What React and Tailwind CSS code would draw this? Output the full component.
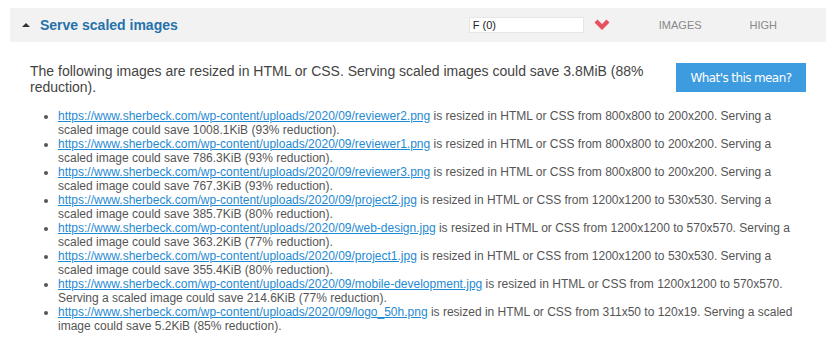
import React from "react";

const base = "https://www.sherbeck.com/wp-content/uploads/2020/09/";
const items = [
  ["reviewer2.png", "800x800 to 200x200", "1008.1KiB (93% reduction)."],
  ["reviewer1.png", "800x800 to 200x200", "786.3KiB (93% reduction)."],
  ["reviewer3.png", "800x800 to 200x200", "767.3KiB (93% reduction)."],
  ["project2.jpg", "1200x1200 to 530x530", "385.7KiB (80% reduction)."],
  ["web-design.jpg", "1200x1200 to 570x570", "363.2KiB (77% reduction)."],
  ["project1.jpg", "1200x1200 to 530x530", "355.4KiB (80% reduction)."],
  ["mobile-development.jpg", "1200x1200 to 570x570", "214.6KiB (77% reduction)."],
  ["logo_50h.png", "311x50 to 120x19", "5.2KiB (85% reduction)."],
];

export default function App() {
  return (
    <div className="bg-white w-[837px] h-[341px] pt-2 px-[10px] font-['Liberation_Sans',Arial,sans-serif] text-[#555]">
      <div className="w-[816px]">
        <div className="h-[34px] bg-[#f2f2f2] flex items-center">
          <span className="ml-[12px] w-0 h-0 border-l-[4px] border-r-[4px] border-b-[4px] border-l-transparent border-r-transparent border-b-[#333]"></span>
          <span className="ml-[10px] text-[14px] font-bold text-[#2471ab] leading-none">Serve scaled images</span>
          <div className="ml-[291px] w-[115px] h-[16px] bg-white border border-[#e6e6e6] flex items-center pl-[3px] text-[11px] text-[#222]">F (0)</div>
          <svg className="ml-[10px]" width="16" height="12" viewBox="0 0 16 12">
            <path d="M0.5 3.5 L3.5 0.5 L8 5 L12.5 0.5 L15.5 3.5 L8 11 Z" fill="#e8505f" />
          </svg>
          <span className="ml-[49px] text-[11px] text-[#888]">IMAGES</span>
          <span className="ml-[48px] text-[11px] text-[#888]">HIGH</span>
        </div>
        <div className="px-5 pt-[21px]">
          <div className="flex items-start">
            <p className="flex-1 text-[14px] leading-[16px] text-[#444] pr-[30px]">
              The following images are resized in HTML or CSS. Serving scaled images could save 3.8MiB (88% reduction).
            </p>
            <button className="w-[130px] h-[29px] bg-[#3d9be0] text-white text-[12px] font-['DejaVu_Sans',sans-serif] tracking-[-0.6px]">
              What's this mean?
            </button>
          </div>
          <ul className="mt-[14px] pl-[28px] list-disc text-[12px] leading-[14px] text-[#555] marker:text-[#555]">
            {items.map(([f, dims, save]) => (
              <li key={f}>
                <a className="text-[#1f8ad3] underline" href="#">{base + f}</a> is resized in HTML or CSS from {dims}. Serving a scaled image could save {save}
              </li>
            ))}
          </ul>
        </div>
      </div>
    </div>
  );
}
